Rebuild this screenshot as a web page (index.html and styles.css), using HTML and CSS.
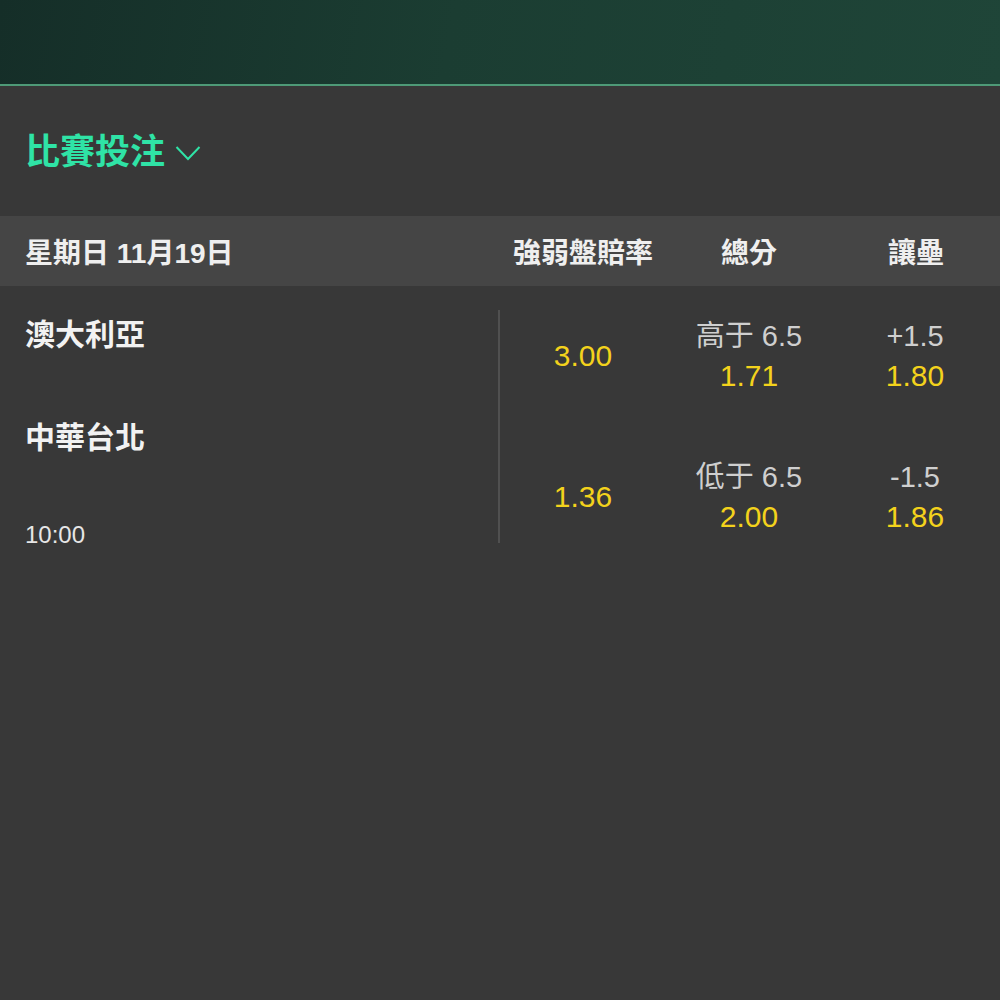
FILE: index.html
```html
<!DOCTYPE html>
<html lang="zh-Hant">
<head>
  <meta charset="UTF-8">
  <meta name="viewport" content="width=device-width, initial-scale=1.0">
  <title>比賽投注</title>
  <link rel="stylesheet" href="styles.css">
</head>
<body>

  <header class="top-bar"></header>

  <main class="market">

    <div class="market-title">
      <h2>比賽投注</h2>
      <svg class="chevron" width="26" height="16" viewBox="0 0 26 16">
        <polyline points="1.5,2 13,14 24.5,2" fill="none" stroke="#2fe3a6" stroke-width="2"/>
      </svg>
    </div>

    <div class="market-head">
      <span class="date">星期日 11月19日</span>
      <span class="col">強弱盤賠率</span>
      <span class="col">總分</span>
      <span class="col">讓壘</span>
    </div>

    <div class="match">
      <div class="teams">
        <p class="team">澳大利亞</p>
        <p class="team second">中華台北</p>
        <p class="time">10:00</p>
      </div>

      <div class="odds">
        <div class="odds-line">
          <div class="cell"><span class="price">3.00</span></div>
          <div class="cell"><span class="label">高于 6.5</span><span class="price">1.71</span></div>
          <div class="cell"><span class="label">+1.5</span><span class="price">1.80</span></div>
        </div>
        <div class="odds-line">
          <div class="cell"><span class="price">1.36</span></div>
          <div class="cell"><span class="label">低于 6.5</span><span class="price">2.00</span></div>
          <div class="cell"><span class="label">-1.5</span><span class="price">1.86</span></div>
        </div>
      </div>
    </div>

  </main>

</body>
</html>
```

FILE: styles.css
```css
body{
  margin: 0;padding: 0;box-sizing: border-box;
  background-color: #383838;
  color: #ededed;
  height: 100vh;
  font-family: "Liberation Sans", "Noto Sans CJK TC", sans-serif;
}

header.top-bar{
  height: 84px;
  background: linear-gradient(100deg, #152e28 0%, #1b3d32 45%, #1f4538 100%);
  border-bottom: 2px solid #4e9a77;
}

main.market div.market-title{
  display: flex;
  align-items: center;
  gap: 10px;
  padding: 46px 25px 44px;
}

main.market div.market-title h2{
  margin: 0;
  font-size: 35px;
  line-height: 40px;
  font-weight: 700;
  color: #2fe3a6;
}

main.market div.market-title svg.chevron{
  margin-top: 2px;
}

main.market div.market-head{
  display: grid;
  grid-template-columns: 1fr 166px 166px 168px;
  align-items: center;
  height: 70px;
  background-color: #454545;
  font-size: 28px;
  font-weight: 700;
  color: #efefef;
}

main.market div.market-head span.date{
  padding-left: 25px;
}

main.market div.market-head span.col{
  text-align: center;
}

main.market div.match{
  display: grid;
  grid-template-columns: 1fr 502px;
  align-items: start;
  margin-top: 24px;
}

main.market div.match div.teams{
  padding-left: 25px;
}

main.market div.match p{
  margin: 0;
}

main.market div.match p.team{
  font-size: 30px;
  line-height: 50px;
  font-weight: 700;
  color: #f2f2f2;
}

main.market div.match p.second{
  margin-top: 53px;
}

main.market div.match p.time{
  margin-top: 60px;
  font-size: 24px;
  line-height: 24px;
  color: #e6e6e6;
}

main.market div.match div.odds{
  height: 233px;
  box-sizing: border-box;
  padding: 6px 0;
  border-left: 2px solid #505050;
  display: flex;
  flex-direction: column;
  justify-content: space-between;
}

main.market div.match div.odds-line{
  display: grid;
  grid-template-columns: 166px 166px 166px;
  height: 80px;
}

main.market div.match div.cell{
  display: flex;
  flex-direction: column;
  align-items: center;
  justify-content: center;
  font-size: 30px;
  line-height: 40px;
}

main.market div.match span.label{
  font-size: 29px;
  color: #cfcfcf;
}

main.market div.match span.price{
  color: #f3d21c;
}
```
